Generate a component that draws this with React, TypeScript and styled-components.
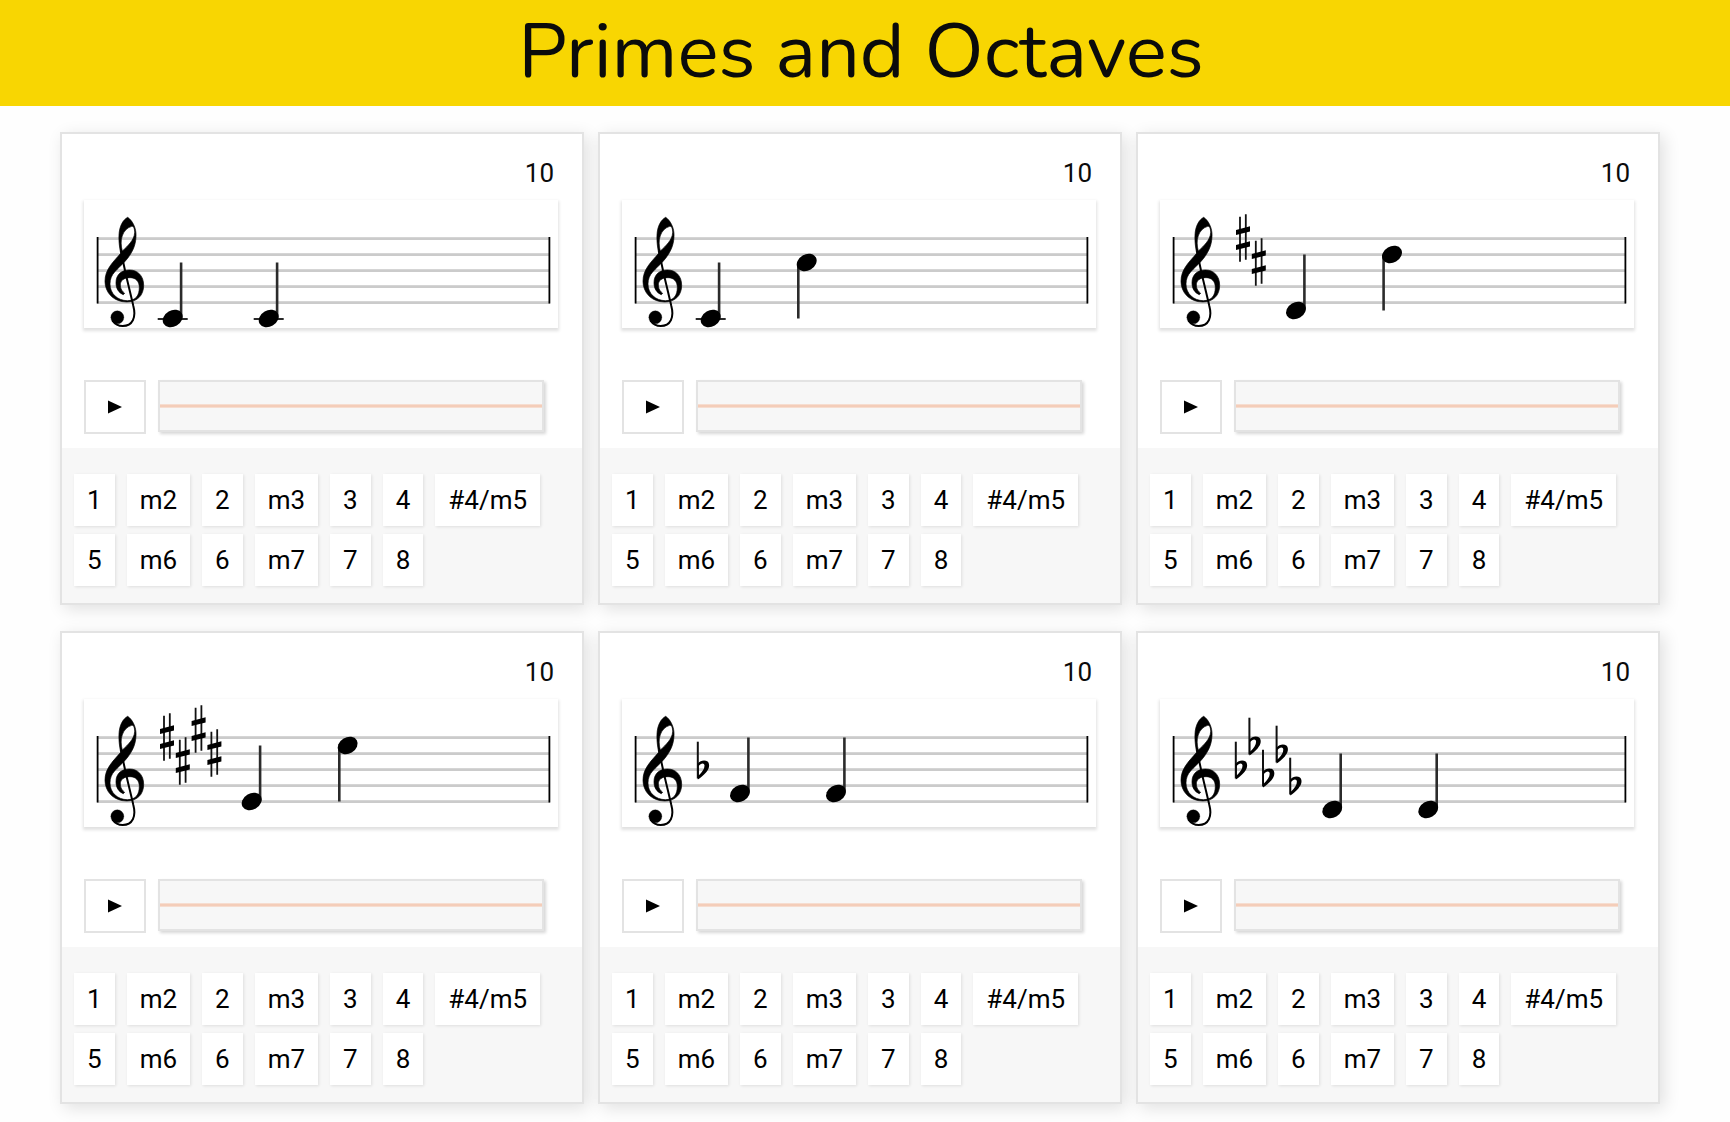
import React from "react";
import styled, { createGlobalStyle } from "styled-components";

const GlobalStyle = createGlobalStyle`
  * { box-sizing: border-box; }
  body {
    margin: 0;
    background: #fefefe;
    color: #0b0b0b;
    font-family: Roboto, "Liberation Sans", sans-serif;
  }
`;

const Header = styled.header`
  display: flex;
  justify-content: center;
  padding: 0 24px 2px 16px;
  background: #f8d602;
`;

const Title = styled.h1`
  margin: 0;
  font-family: Nunito, "Open Sans", "Noto Sans", sans-serif;
  font-size: 77px;
  line-height: 104px;
  font-weight: 400;
  color: #0b0b0b;
`;

const Grid = styled.main`
  display: grid;
  grid-template-columns: repeat(3, minmax(0, 1fr));
  gap: 26px 14px;
  padding: 26px 70px 18px 60px;
`;

const Card = styled.section`
  display: flex;
  flex-direction: column;
  background: #fff;
  border: 2px solid #e3e3e3;
  box-shadow: 4px 4px 16px rgba(0, 0, 0, 0.12);
`;

const Exercise = styled.div`
  padding: 24px 24px 14px 22px;
`;

const Score = styled.p`
  margin: 0 4px 12px 0;
  font-size: 26px;
  line-height: 30px;
  text-align: right;
`;

const StaffBox = styled.div`
  background: #fff;
  box-shadow: 0 2px 3px 1px rgba(0, 0, 0, 0.12);

  svg {
    display: block;
    width: 100%;
    height: auto;
  }
`;

const Player = styled.div`
  display: flex;
  align-items: stretch;
  gap: 12px;
  height: 54px;
  margin-top: 52px;
  padding-right: 14px;
`;

const PlayButton = styled.button`
  display: grid;
  place-items: center;
  width: 62px;
  padding: 0;
  background: #fff;
  border: 2px solid #e3e3e3;
  cursor: pointer;
`;

const Wave = styled.div`
  display: flex;
  flex: 1;
  flex-direction: column;
  justify-content: center;
  margin-bottom: 2px;
  background: #f7f7f7;
  border: 2px solid #e3e3e3;
  box-shadow: 2px 2px 3px rgba(0, 0, 0, 0.16);
`;

const WaveLine = styled.div`
  height: 4px;
  background: #f4cdb9;
  border: solid #f6ddd0;
  border-width: 1px 0;
`;

const Answers = styled.div`
  display: flex;
  flex-wrap: wrap;
  gap: 8px 12px;
  padding: 26px 12px 17px;
  background: #f7f7f7;
`;

const AnswerButton = styled.button`
  height: 52px;
  padding: 0 13px;
  border: 0;
  background: #fff;
  color: #000;
  font-family: inherit;
  font-size: 26px;
  line-height: 30px;
  box-shadow: 1px 1px 3px rgba(0, 0, 0, 0.1);
  cursor: pointer;
`;

type Exercise = {
  name: string;
  sharps?: number;
  flats?: number;
  x: number;
  y: number;
  octave?: boolean;
};

const exercises: Exercise[] = [
  { name: "C prime", x: 88.7, y: 118.5 },
  { name: "C octave", x: 88.7, y: 118.5, octave: true },
  { name: "D octave", sharps: 2, x: 136, y: 110.5, octave: true },
  { name: "E octave", sharps: 4, x: 167.7, y: 102.5, octave: true },
  { name: "F prime", flats: 1, x: 118, y: 94.5 },
  { name: "D flat prime", flats: 5, x: 172.3, y: 110.5 },
];

const intervals = ["1", "m2", "2", "m3", "3", "4", "#4/m5", "5", "m6", "6", "m7", "7", "8"];

const staffLines = [37.2, 53.2, 69.2, 85.2, 101.2];
const sharpHeights = [38.3, 62.3, 30.3, 54.3];
const flatHeights = [70, 46, 78, 54, 86];

function Clef() {
  return (
    <g transform="translate(-4 0) scale(.3333)" stroke="#000">
      <path
        fillRule="evenodd"
        strokeWidth="2"
        d="M143 52C156 60 170 84 168 110C167 140 154 162 137 182C112 210 90 220 90 252C90 282 114 302 142 302C168 302 178 286 178 262C178 245 168 233 150 233C131 233 121 242 121 255C121 268 128 275 134 280L130 284C116 278 108 266 108 248C108 224 124 210 148 210C174 210 191 228 191 256C191 288 170 306 140 306C101 306 75 278 75 244C75 208 98 188 122 160C118 140 116 122 117 105C118 80 128 60 143 52ZM155 79C161 78 164 86 164 98C163 120 143 138 127 153C118 122 126 88 155 79Z"
      />
      <path
        d="M123 152C132 205 149 270 160 318C169 352 158 378 128 378C114 378 104 371 97 361"
        fill="none"
        strokeWidth="6"
      />
      <circle cx="112" cy="352" r="19.5" strokeWidth="1" />
    </g>
  );
}

function Sharp({ x, y }: { x: number; y: number }) {
  return (
    <g transform={`translate(${x} ${y})`}>
      <path d="M-3 -21.5V23.5M2.8 -24V21.5" stroke="#111" strokeWidth="1.8" />
      <path d="M-7 -7.4L7 -11V-5.8L-7 -2.2ZM-7 7.6L7 4V9.2L-7 12.8Z" transform="translate(0 -1)" />
    </g>
  );
}

function Flat({ x, y }: { x: number; y: number }) {
  return (
    <g transform={`translate(${x} ${y})`}>
      <path d="M0 -27.3V9.5" stroke="#111" strokeWidth="2" />
      <path
        fillRule="evenodd"
        d="M0 -5.2C2.5 -8.6 7 -9.4 9.8 -7.4C12.4 -4.8 11.6 -.4 8.2 3.4C5.8 6.2 2.4 8.8 0 10.6ZM.9 -3V6.6C4.4 3.2 6.8 -.2 6.7 -3.4C6.6 -6.6 3 -6.2 .9 -3Z"
      />
    </g>
  );
}

function Note({ x, y, down }: { x: number; y: number; down?: boolean }) {
  const stemX = down ? x - 8.4 : x + 8.4;
  return (
    <g>
      {y > 115 && <path d={`M${x - 15} ${y + 0.5}h30`} stroke="#111" strokeWidth="1.8" />}
      <path d={`M${stemX} ${y}V${down ? y + 56 : y - 56}`} stroke="#2b2b2b" strokeWidth="2.6" />
      <ellipse rx="10.5" ry="8.1" transform={`translate(${x} ${y}) rotate(-30)`} />
    </g>
  );
}

function Staff({ item }: { item: Exercise }) {
  return (
    <StaffBox>
      <svg viewBox="0 0 474 128" role="img" aria-label={item.name}>
        {staffLines.map((y) => (
          <rect key={y} x="13" y={y} width="453" height="2.8" fill="#cbcbcb" />
        ))}
        <path d="M13.6 37V103.5M465.4 37V103.5" stroke="#000" strokeWidth="1.8" />
        <Clef />
        {sharpHeights.slice(0, item.sharps ?? 0).map((y, i) => (
          <Sharp key={y} x={83 + i * 15.8} y={y} />
        ))}
        {flatHeights.slice(0, item.flats ?? 0).map((y, i) => (
          <Flat key={y} x={75.8 + i * 13.6} y={y} />
        ))}
        <Note x={item.x} y={item.y} />
        <Note x={item.x + 96} y={item.octave ? item.y - 56 : item.y} down={item.octave} />
      </svg>
    </StaffBox>
  );
}

export default function App() {
  return (
    <>
      <GlobalStyle />
      <Header>
        <Title>Primes and Octaves</Title>
      </Header>
      <Grid>
        {exercises.map((item) => (
          <Card key={item.name}>
            <Exercise>
              <Score>10</Score>
              <Staff item={item} />
              <Player>
                <PlayButton type="button" aria-label="Play">
                  <svg width="14" height="14" viewBox="0 0 14 14" aria-hidden="true">
                    <path d="M0 0.5L14 7L0 13.5Z" />
                  </svg>
                </PlayButton>
                <Wave>
                  <WaveLine />
                </Wave>
              </Player>
            </Exercise>
            <Answers>
              {intervals.map((label) => (
                <AnswerButton key={label} type="button">
                  {label}
                </AnswerButton>
              ))}
            </Answers>
          </Card>
        ))}
      </Grid>
    </>
  );
}
